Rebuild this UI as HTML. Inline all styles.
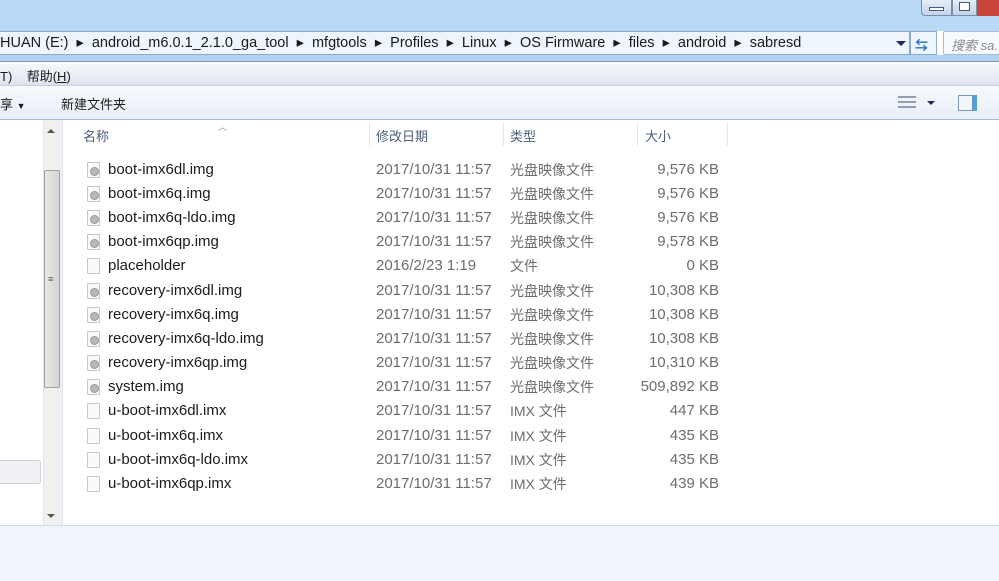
<!DOCTYPE html>
<html><head><meta charset="utf-8"><style>
*{margin:0;padding:0;box-sizing:border-box}
body{width:999px;height:581px;overflow:hidden;background:#fff;font-family:"Liberation Sans","Noto Sans CJK SC",sans-serif;position:relative}
.a{position:absolute;white-space:nowrap}
.t{font-size:15px;line-height:18px;height:18px;color:#1b1b1b}
.g{font-size:15px;line-height:18px;height:18px;color:#6d6d6d}
.c{font-size:14px}
.row .ic{position:absolute;left:87px;width:13px;height:16px;background:#fafafa;border:1px solid #c8c8c8;border-radius:1px}
.ic.d::after{content:"";position:absolute;left:2px;top:4px;width:7px;height:7px;border-radius:50%;background:#b8b8b8;border:1px solid #999}
</style></head><body>
<div class="a" style="left:0;top:0;width:999px;height:31px;background:#b9daf7"></div>
<div class="a" style="left:921px;top:0;width:31px;height:16px;background:linear-gradient(#e6eef8,#c3d3e8);border:1px solid #7c8fa8;border-top:none;border-radius:0 0 0 4px"></div>
<div class="a" style="left:929px;top:7px;width:15px;height:4px;border:1px solid #4a5a70;background:#fff"></div>
<div class="a" style="left:952px;top:0;width:25px;height:16px;background:linear-gradient(#e6eef8,#c3d3e8);border:1px solid #7c8fa8;border-top:none"></div>
<div class="a" style="left:959px;top:2px;width:11px;height:9px;border:1px solid #4a5a70;background:#fff"></div>
<div class="a" style="left:977px;top:0;width:22px;height:16px;background:#c9453a"></div>
<div class="a" style="left:0;top:31px;width:910px;height:24px;background:#eef5fc;border:1px solid #8ea8c5;border-left:none"></div>
<div class="a t" style="left:0;top:34px;font-size:14.5px;color:#1a1a1a">HUAN (E:) &nbsp;▸&nbsp; android_m6.0.1_2.1.0_ga_tool &nbsp;▸&nbsp; mfgtools &nbsp;▸&nbsp; Profiles &nbsp;▸&nbsp; Linux &nbsp;▸&nbsp; OS Firmware &nbsp;▸&nbsp; files &nbsp;▸&nbsp; android &nbsp;▸&nbsp; sabresd</div>
<div class="a" style="left:896px;top:41px;border-left:5px solid transparent;border-right:5px solid transparent;border-top:5px solid #1c2a55"></div>
<div class="a" style="left:910px;top:31px;width:27px;height:24px;background:#eef5fc;border:1px solid #8ea8c5"></div>
<div class="a" style="left:915px;top:35px;font-size:13px;color:#2a6fc4;font-weight:bold">⇆</div>
<div class="a" style="left:943px;top:31px;width:60px;height:24px;background:#f6f9fd;border:1px solid #a9bcd3;border-radius:2px"></div>
<div class="a" style="left:951px;top:35px;font-size:13px;color:#8a8a8a;font-style:italic">搜索 sa.</div>
<div class="a" style="left:0;top:55px;width:999px;height:7px;background:#b0d2f3;border-bottom:1px solid #7f97b3"></div>
<div class="a" style="left:0;top:63px;width:999px;height:23px;background:linear-gradient(#f7f9fc,#dde3ef);border-bottom:1px solid #c5cfdd"></div>
<div class="a" style="left:0;top:66px;font-size:13px;color:#1b1b1b">T) &nbsp;&nbsp;&nbsp;帮助(<u>H</u>)</div>
<div class="a" style="left:0;top:86px;width:999px;height:34px;background:linear-gradient(#f7fafd,#e8eef7);border-bottom:1px solid #a9bcd3"></div>
<div class="a" style="left:0;top:94px;font-size:13px;color:#1b1b1b">享 <span style="font-size:9px">▼</span></div>
<div class="a" style="left:61px;top:94px;font-size:13px;color:#1b1b1b">新建文件夹</div>
<div class="a" style="left:898px;top:96px;width:18px;height:14px;background:repeating-linear-gradient(#6a7890 0 2px,transparent 2px 5px);opacity:.7"></div>
<div class="a" style="left:927px;top:101px;border-left:4px solid transparent;border-right:4px solid transparent;border-top:4px solid #1c2a55"></div>
<div class="a" style="left:958px;top:95px;width:19px;height:16px;background:#f2f6fb;border:1px solid #7f95b0;border-right:5px solid #5a9bd0"></div>
<div class="a" style="left:0;top:460px;width:41px;height:24px;background:#eef0f3;border:1px solid #d0d4da;border-left:none;border-radius:0 3px 3px 0"></div>
<div class="a" style="left:43px;top:120px;width:19px;height:406px;background:#f0f0f0;border-left:1px solid #e4e4e4"></div>
<div class="a" style="left:47px;top:129px;border-left:4px solid transparent;border-right:4px solid transparent;border-bottom:4px solid #555"></div>
<div class="a" style="left:47px;top:514px;border-left:4px solid transparent;border-right:4px solid transparent;border-top:4px solid #555"></div>
<div class="a" style="left:44px;top:170px;width:16px;height:218px;background:linear-gradient(90deg,#e8e8e8,#d4d4d4);border:1px solid #a0a0a0;border-radius:2px"></div>
<div class="a" style="left:48px;top:274px;font-size:9px;color:#555">≡</div>
<div class="a" style="left:62px;top:120px;width:1px;height:406px;background:#dde6f1"></div>
<div class="a" style="left:218px;top:120px;font-size:9px;color:#7a9ac0">︿</div>
<div class="a" style="left:83px;top:126px;font-size:13px;color:#4c607a">名称</div>
<div class="a" style="left:376px;top:126px;font-size:13px;color:#4c607a">修改日期</div>
<div class="a" style="left:510px;top:126px;font-size:13px;color:#4c607a">类型</div>
<div class="a" style="left:645px;top:126px;font-size:13px;color:#4c607a">大小</div>
<div class="a" style="left:369px;top:122px;width:1px;height:24px;background:#e3e8ef"></div>
<div class="a" style="left:503px;top:122px;width:1px;height:24px;background:#e3e8ef"></div>
<div class="a" style="left:637px;top:122px;width:1px;height:24px;background:#e3e8ef"></div>
<div class="a" style="left:727px;top:122px;width:1px;height:24px;background:#e3e8ef"></div>
<div class="row">
<div class="ic d" style="top:162px"></div><div class="a t" style="left:108px;top:161px">boot-imx6dl.img</div><div class="a g" style="left:376px;top:161px">2017/10/31 11:57</div><div class="a g c" style="left:510px;top:161px">光盘映像文件</div><div class="a g" style="right:280px;top:161px">9,576 KB</div>
<div class="ic d" style="top:186px"></div><div class="a t" style="left:108px;top:185px">boot-imx6q.img</div><div class="a g" style="left:376px;top:185px">2017/10/31 11:57</div><div class="a g c" style="left:510px;top:185px">光盘映像文件</div><div class="a g" style="right:280px;top:185px">9,576 KB</div>
<div class="ic d" style="top:210px"></div><div class="a t" style="left:108px;top:209px">boot-imx6q-ldo.img</div><div class="a g" style="left:376px;top:209px">2017/10/31 11:57</div><div class="a g c" style="left:510px;top:209px">光盘映像文件</div><div class="a g" style="right:280px;top:209px">9,576 KB</div>
<div class="ic d" style="top:234px"></div><div class="a t" style="left:108px;top:233px">boot-imx6qp.img</div><div class="a g" style="left:376px;top:233px">2017/10/31 11:57</div><div class="a g c" style="left:510px;top:233px">光盘映像文件</div><div class="a g" style="right:280px;top:233px">9,578 KB</div>
<div class="ic" style="top:258px"></div><div class="a t" style="left:108px;top:257px">placeholder</div><div class="a g" style="left:376px;top:257px">2016/2/23 1:19</div><div class="a g c" style="left:510px;top:257px">文件</div><div class="a g" style="right:280px;top:257px">0 KB</div>
<div class="ic d" style="top:283px"></div><div class="a t" style="left:108px;top:282px">recovery-imx6dl.img</div><div class="a g" style="left:376px;top:282px">2017/10/31 11:57</div><div class="a g c" style="left:510px;top:282px">光盘映像文件</div><div class="a g" style="right:280px;top:282px">10,308 KB</div>
<div class="ic d" style="top:307px"></div><div class="a t" style="left:108px;top:306px">recovery-imx6q.img</div><div class="a g" style="left:376px;top:306px">2017/10/31 11:57</div><div class="a g c" style="left:510px;top:306px">光盘映像文件</div><div class="a g" style="right:280px;top:306px">10,308 KB</div>
<div class="ic d" style="top:331px"></div><div class="a t" style="left:108px;top:330px">recovery-imx6q-ldo.img</div><div class="a g" style="left:376px;top:330px">2017/10/31 11:57</div><div class="a g c" style="left:510px;top:330px">光盘映像文件</div><div class="a g" style="right:280px;top:330px">10,308 KB</div>
<div class="ic d" style="top:355px"></div><div class="a t" style="left:108px;top:354px">recovery-imx6qp.img</div><div class="a g" style="left:376px;top:354px">2017/10/31 11:57</div><div class="a g c" style="left:510px;top:354px">光盘映像文件</div><div class="a g" style="right:280px;top:354px">10,310 KB</div>
<div class="ic d" style="top:379px"></div><div class="a t" style="left:108px;top:378px">system.img</div><div class="a g" style="left:376px;top:378px">2017/10/31 11:57</div><div class="a g c" style="left:510px;top:378px">光盘映像文件</div><div class="a g" style="right:280px;top:378px">509,892 KB</div>
<div class="ic" style="top:403px"></div><div class="a t" style="left:108px;top:402px">u-boot-imx6dl.imx</div><div class="a g" style="left:376px;top:402px">2017/10/31 11:57</div><div class="a g c" style="left:510px;top:402px">IMX 文件</div><div class="a g" style="right:280px;top:402px">447 KB</div>
<div class="ic" style="top:428px"></div><div class="a t" style="left:108px;top:427px">u-boot-imx6q.imx</div><div class="a g" style="left:376px;top:427px">2017/10/31 11:57</div><div class="a g c" style="left:510px;top:427px">IMX 文件</div><div class="a g" style="right:280px;top:427px">435 KB</div>
<div class="ic" style="top:452px"></div><div class="a t" style="left:108px;top:451px">u-boot-imx6q-ldo.imx</div><div class="a g" style="left:376px;top:451px">2017/10/31 11:57</div><div class="a g c" style="left:510px;top:451px">IMX 文件</div><div class="a g" style="right:280px;top:451px">435 KB</div>
<div class="ic" style="top:476px"></div><div class="a t" style="left:108px;top:475px">u-boot-imx6qp.imx</div><div class="a g" style="left:376px;top:475px">2017/10/31 11:57</div><div class="a g c" style="left:510px;top:475px">IMX 文件</div><div class="a g" style="right:280px;top:475px">439 KB</div>
</div>
<div class="a" style="left:0;top:525px;width:999px;height:56px;background:#f0f4fb;border-top:1px solid #cfdbeb"></div>
</body></html>
